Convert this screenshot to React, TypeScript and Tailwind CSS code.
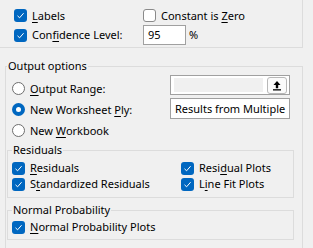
import React from "react";

const F = { fontFamily: '"Noto Sans", "Segoe UI", sans-serif' };

function Check({ on }: { on: boolean }) {
  return on ? (
    <span className="w-[13px] h-[13px] rounded-[3px] bg-[#0067c0] flex items-center justify-center shrink-0">
      <svg width="9" height="9" viewBox="0 0 9 9">
        <path d="M1.5 4.8 L3.6 6.8 L7.6 2.2" fill="none" stroke="white" strokeWidth="1" />
      </svg>
    </span>
  ) : (
    <span className="w-[13px] h-[13px] rounded-[3px] bg-white border border-[#8a8a8a] shrink-0" />
  );
}

function Radio({ on }: { on: boolean }) {
  return on ? (
    <span className="w-[13px] h-[13px] rounded-full bg-[#0067c0] flex items-center justify-center shrink-0">
      <span className="w-[5px] h-[5px] rounded-full bg-white" />
    </span>
  ) : (
    <span className="w-[13px] h-[13px] rounded-full bg-white border border-[#6e6e6e] shrink-0" />
  );
}

function L({ a, u, b }: { a: string; u: string; b: string }) {
  return (
    <span className="whitespace-nowrap">
      {a}
      <span className="underline underline-offset-[2px]">{u}</span>
      {b}
    </span>
  );
}

export default function App() {
  return (
    <div style={F} className="w-[313px] h-[248px] bg-[#f0f0f0] overflow-hidden text-[11px] leading-[14px] text-black">
      {/* top group */}
      <div className="w-[303px] h-[48px] border-r border-b border-[#dcdcdc] pl-[14px] pt-[9px]">
        <div className="flex h-[13px] items-center">
          <div className="w-[129px] flex items-center gap-[5px]">
            <Check on />
            <L a="" u="L" b="abels" />
          </div>
          <div className="flex items-center gap-[5px]">
            <Check on={false} />
            <L a="Constant is " u="Z" b="ero" />
          </div>
        </div>
        <div className="flex h-[20px] mt-[3px] items-center">
          <div className="w-[129px] flex items-center gap-[5px]">
            <Check on />
            <L a="Con" u="f" b="idence Level:" />
          </div>
          <div className="w-[43px] h-[20px] bg-white border border-[#a0a0a0] pl-[4px] flex items-center">95</div>
          <span className="ml-[3px]">%</span>
        </div>
      </div>

      {/* Output options */}
      <div className="relative ml-[5px] mt-[18px] w-[298px] h-[200px] border border-[#dcdcdc]">
        <span className="absolute left-[1px] top-[-8px] bg-[#f0f0f0] px-[1px]">Output options</span>
        <div className="flex">
          <div className="flex flex-col pt-[11px] pl-[6px] w-[164px]">
            <div className="h-[21px] flex items-center gap-[5px]">
              <Radio on={false} />
              <L a="" u="O" b="utput Range:" />
            </div>
            <div className="h-[21px] flex items-center gap-[5px]">
              <Radio on />
              <L a="New Worksheet " u="P" b="ly:" />
            </div>
            <div className="h-[21px] flex items-center gap-[5px]">
              <Radio on={false} />
              <L a="New " u="W" b="orkbook" />
            </div>
          </div>
          <div className="flex flex-col pt-[8px]">
            <div className="w-[120px] h-[20px] bg-white border border-[#a0a0a0] flex items-center pl-[3px] pr-[1px] gap-[4px]">
              <div className="w-[89px] h-[14px] bg-[#f0f0f0]" />
              <div className="w-[20px] h-[17px] rounded-[3px] border border-[#b8b8b8] bg-[#fbfbfb] flex items-center justify-center">
                <svg width="10" height="11" viewBox="0 0 10 11">
                  <path d="M5 1 L1.5 5 H3.8 V8.2 H6.2 V5 H8.5 Z" fill="black" />
                  <rect x="1" y="9.2" width="8" height="1.3" fill="black" />
                </svg>
              </div>
            </div>
            <div className="w-[120px] h-[21px] mt-[3px] bg-white border border-[#a0a0a0] flex items-center pl-[4px] whitespace-nowrap overflow-hidden">
              Results from Multiple
            </div>
          </div>
        </div>

        {/* Residuals */}
        <div className="relative ml-[1px] mt-[9px] w-[287px] h-[48px] border border-[#dcdcdc] pt-[9px] pl-[4px]">
          <span className="absolute left-[4px] top-[-8px] bg-[#f0f0f0] px-[1px]">Residuals</span>
          <div className="flex">
            <div className="w-[169px] flex flex-col">
              <div className="h-[16px] flex items-center gap-[5px]">
                <Check on />
                <L a="" u="R" b="esiduals" />
              </div>
              <div className="h-[16px] flex items-center gap-[5px]">
                <Check on />
                <L a="S" u="t" b="andardized Residuals" />
              </div>
            </div>
            <div className="flex flex-col">
              <div className="h-[16px] flex items-center gap-[5px]">
                <Check on />
                <L a="Resi" u="d" b="ual Plots" />
              </div>
              <div className="h-[16px] flex items-center gap-[5px]">
                <Check on />
                <L a="L" u="i" b="ne Fit Plots" />
              </div>
            </div>
          </div>
        </div>

        {/* Normal Probability */}
        <div className="relative ml-[1px] mt-[12px] w-[287px] h-[30px] border border-[#dcdcdc] pt-[8px] pl-[4px]">
          <span className="absolute left-[4px] top-[-8px] bg-[#f0f0f0] px-[1px]">Normal Probability</span>
          <div className="h-[16px] flex items-center gap-[5px]">
            <Check on />
            <L a="" u="N" b="ormal Probability Plots" />
          </div>
        </div>
      </div>
    </div>
  );
}
